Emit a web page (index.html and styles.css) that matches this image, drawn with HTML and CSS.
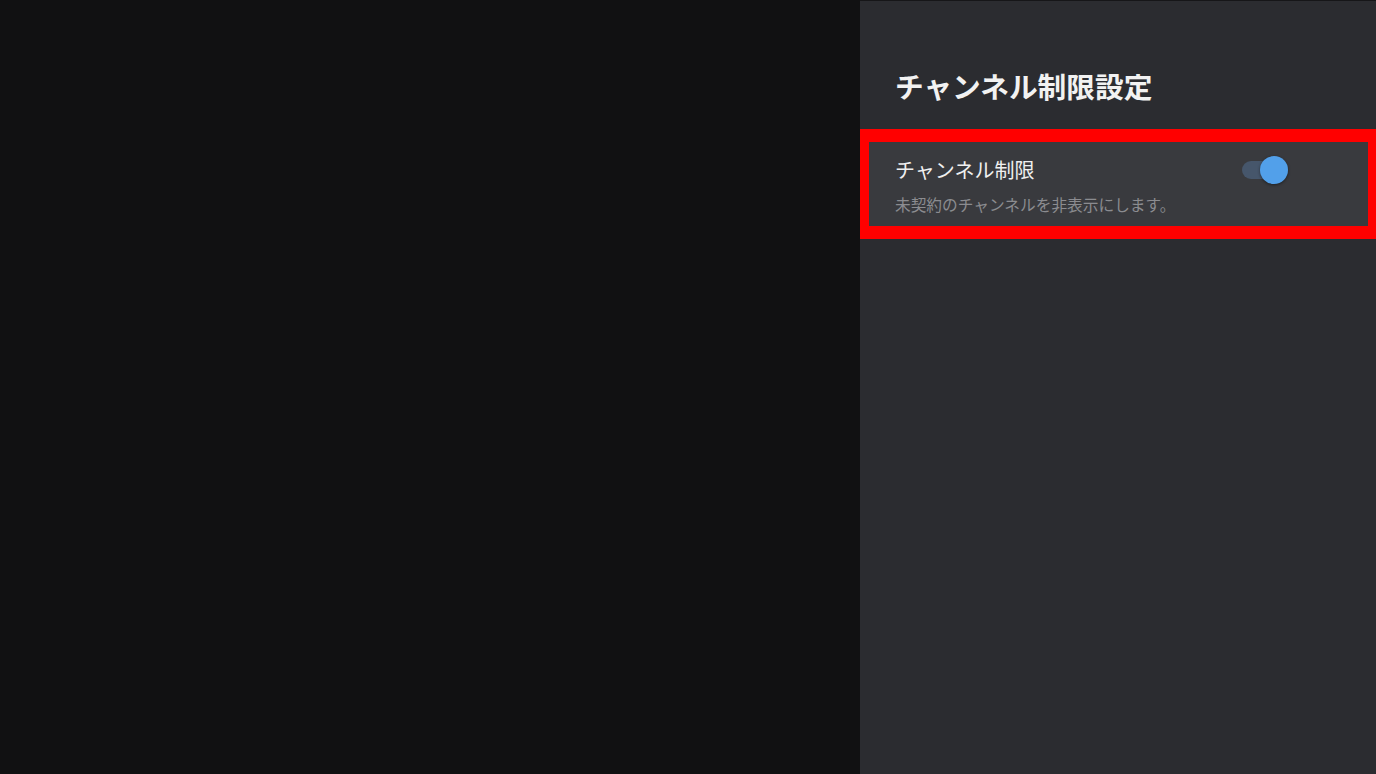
FILE: index.html
```html
<!DOCTYPE html>
<html lang="ja">
<head>
    <meta charset="UTF-8">
    <meta name="viewport" content="width=device-width, initial-scale=1.0">
    <title>チャンネル制限設定</title>
    <link rel="stylesheet" href="styles.css">
</head>
<body>
    <div class="screen">
        <div class="backdrop"></div>

        <aside class="panel">
            <h1 class="panel-title">チャンネル制限設定</h1>

            <div class="setting focused">
                <div class="setting-inner">
                    <div class="setting-head">
                        <span class="setting-label">チャンネル制限</span>
                        <span class="switch on"><span class="knob"></span></span>
                    </div>
                    <p class="setting-desc">未契約のチャンネルを非表示にします。</p>
                </div>
            </div>
        </aside>
    </div>
</body>
</html>
```

FILE: styles.css
```css
body {
    margin: 0;
    padding: 0;
    background: #111112;
    font-family: "Noto Sans CJK JP", "Noto Sans", sans-serif;
    color: #fff;
}
.screen {
    display: flex;
    width: 1376px;
    height: 774px;
    overflow: hidden;
}
.backdrop {
    flex: 1;
    background: #111112;
}
.panel {
    width: 516px;
    background: #2b2c30;
    border-top: 1px solid #161618;
    box-sizing: border-box;
}
.panel-title {
    margin: 0;
    padding: 67px 0 0 35px;
    height: 61px;
    font-size: 28.7px;
    line-height: 36px;
    font-weight: 700;
    color: #f2f2f2;
}
.setting {
    border: solid #ff0000;
    border-width: 13px 8px 13px 9px;
}
.setting-inner {
    background: #393a3e;
    padding: 15px 80px 11px 26px;
}
.setting-head {
    display: flex;
    justify-content: space-between;
    align-items: center;
    height: 26px;
}
.setting-label {
    font-size: 20px;
    line-height: 26px;
    color: #f0f0f0;
}
.setting-desc {
    margin: 11px 0 0;
    font-size: 15.7px;
    line-height: 21px;
    color: #8b8c90;
}
.switch {
    position: relative;
    width: 46px;
    height: 18px;
    border-radius: 9px;
    background: #46566b;
}
.switch .knob {
    position: absolute;
    top: -5px;
    right: 0;
    width: 28px;
    height: 28px;
    border-radius: 50%;
    background: #52a0ea;
    box-shadow: 0 1px 3px rgba(0, 0, 0, 0.45);
}
```
